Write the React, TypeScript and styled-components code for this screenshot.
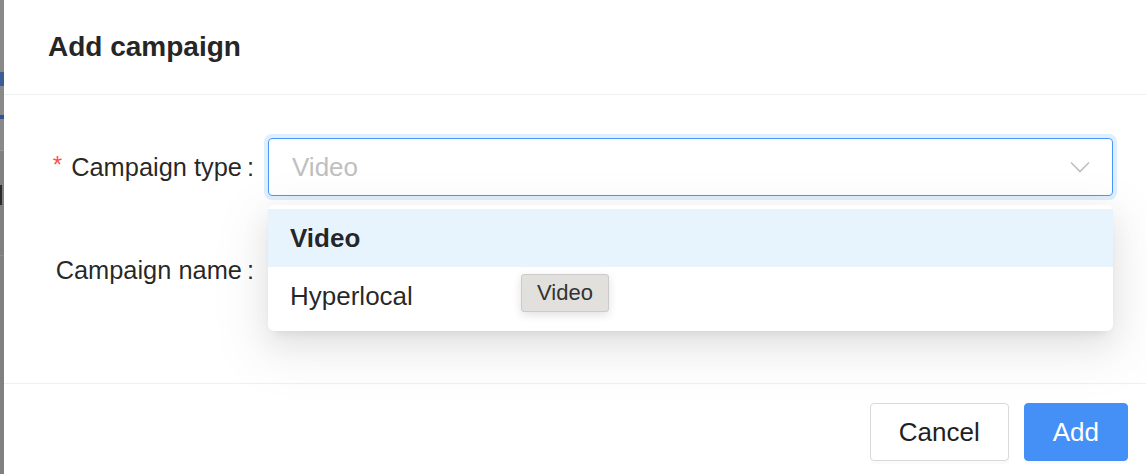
import styled, { createGlobalStyle } from "styled-components";

const GlobalStyle = createGlobalStyle`
  html, body {
    margin: 0;
    padding: 0;
    overflow: hidden;
    background: #808080;
  }
  body {
    font-family: "Liberation Sans", Arial, Helvetica, sans-serif;
  }
`;

const Page = styled.div`
  display: flex;
  width: 1146px;
  height: 474px;
  overflow: hidden;
  background: #808080;
`;

const Backdrop = styled.div`
  width: 4px;
  flex-shrink: 0;
  display: flex;
  flex-direction: column;
`;

const Strip = styled.div<{ $h: number; $bg: string }>`
  height: ${(p) => p.$h}px;
  flex-shrink: 0;
  background: ${(p) => p.$bg};
`;

const Modal = styled.div`
  width: 1154px;
  flex-shrink: 0;
  background: #fff;
  display: flex;
  flex-direction: column;
`;

const Header = styled.div`
  flex-shrink: 0;
  height: 94px;
  padding: 0 44px;
  display: flex;
  align-items: center;
  border-bottom: 1px solid #f0f0f0;
`;

const Title = styled.h2`
  margin: 0;
  font-size: 28px;
  font-weight: 600;
  color: #262626;
`;

const Body = styled.div`
  flex-shrink: 0;
  padding: 43px 45px 39px 45px;
`;

const FormRow = styled.div`
  display: flex;
  align-items: center;
  margin-bottom: 45px;
`;

const Label = styled.label`
  width: 219px;
  flex-shrink: 0;
  display: flex;
  justify-content: flex-end;
  align-items: center;
  font-size: 25.4px;
  color: rgba(0, 0, 0, 0.86);
  white-space: nowrap;
`;

const Required = styled.span`
  color: #ff4d4f;
  font-size: 24px;
  margin-right: 9px;
  position: relative;
  top: -2px;
`;

const Colon = styled.span`
  margin: 0 14px 0 5px;
`;

const Control = styled.div`
  flex: 1;
  position: relative;
`;

const SelectBox = styled.div`
  height: 58px;
  box-sizing: border-box;
  border: 1px solid #4a96fb;
  border-radius: 4px;
  box-shadow: 0 0 0 4px rgba(24, 144, 255, 0.14);
  padding: 0 22px 0 23px;
  display: flex;
  align-items: center;
  justify-content: space-between;
`;

const Placeholder = styled.span`
  font-size: 26px;
  color: #bfbfbf;
`;

const TextInput = styled.div`
  height: 58px;
  box-sizing: border-box;
  border: 1px solid #d9d9d9;
  border-radius: 4px;
`;

const Dropdown = styled.div`
  position: absolute;
  top: calc(100% + 9px);
  left: 0;
  right: 0;
  z-index: 10;
  background: #fff;
  border-radius: 6px;
  padding: 4px 0 6px;
  box-shadow: 0 11px 30px 0 rgba(0, 0, 0, 0.08), 0 6px 11px -7px rgba(0, 0, 0, 0.12),
    0 17px 52px 15px rgba(0, 0, 0, 0.05);
`;

const Option = styled.div<{ $active?: boolean }>`
  height: 58px;
  padding: 0 22px;
  display: flex;
  align-items: center;
  font-size: 26px;
  color: rgba(0, 0, 0, 0.86);
  font-weight: ${(p) => (p.$active ? 700 : 400)};
  background: ${(p) => (p.$active ? "#e8f4fd" : "transparent")};
`;

const Tooltip = styled.div`
  position: absolute;
  left: 253px;
  top: 69px;
  width: 88px;
  height: 38px;
  box-sizing: border-box;
  display: flex;
  align-items: center;
  justify-content: center;
  background: #e1e0dd;
  border: 1px solid #cbcbcb;
  border-radius: 3px;
  font-size: 22px;
  color: #333;
  box-shadow: 0 3px 10px rgba(0, 0, 0, 0.12);
`;

const Footer = styled.div`
  flex-shrink: 0;
  border-top: 1px solid #f0f0f0;
  padding: 19px 30px;
  display: flex;
  justify-content: flex-end;
  gap: 15px;
`;

const Button = styled.button<{ $primary?: boolean }>`
  height: 58px;
  padding: 0 28px;
  font-family: inherit;
  font-size: 26px;
  border-radius: 4px;
  border: 1px solid ${(p) => (p.$primary ? "#4590f7" : "#d9d9d9")};
  background: ${(p) => (p.$primary ? "#4590f7" : "#fff")};
  color: ${(p) => (p.$primary ? "#fff" : "#1f1f1f")};
  box-shadow: 0 3px 0 rgba(0, 0, 0, 0.02);
  cursor: pointer;
`;

const Chevron = () => (
  <svg width="20" height="12" viewBox="0 0 20 12" fill="none">
    <polyline points="1,1.5 10,10.5 19,1.5" stroke="#bfbfbf" strokeWidth="1.6" />
  </svg>
);

export default function App() {
  return (
    <>
      <GlobalStyle />
      <Page>
        <Backdrop>
          <Strip $h={72} $bg="#898989" />
          <Strip $h={14} $bg="#3d5c96" />
          <Strip $h={29} $bg="#898989" />
          <Strip $h={4} $bg="#2f5395" />
          <Strip $h={31} $bg="#898989" />
          <Strip $h={1} $bg="#969696" />
          <Strip $h={34} $bg="#808080" />
          <Strip $h={20} $bg="linear-gradient(to right, #2a2a2a 2px, #808080 2px)" />
          <Strip $h={50} $bg="#808080" />
          <Strip $h={1} $bg="#8c8c8c" />
          <Strip $h={227} $bg="#808080" />
        </Backdrop>
        <Modal>
          <Header>
            <Title>Add campaign</Title>
          </Header>
          <Body>
            <FormRow>
              <Label>
                <Required>*</Required>
                Campaign type
                <Colon>:</Colon>
              </Label>
              <Control>
                <SelectBox>
                  <Placeholder>Video</Placeholder>
                  <Chevron />
                </SelectBox>
                <Dropdown>
                  <Option $active>Video</Option>
                  <Option>Hyperlocal</Option>
                  <Tooltip>Video</Tooltip>
                </Dropdown>
              </Control>
            </FormRow>
            <FormRow>
              <Label>
                Campaign name
                <Colon>:</Colon>
              </Label>
              <Control>
                <TextInput />
              </Control>
            </FormRow>
          </Body>
          <Footer>
            <Button>Cancel</Button>
            <Button $primary>Add</Button>
          </Footer>
        </Modal>
      </Page>
    </>
  );
}
